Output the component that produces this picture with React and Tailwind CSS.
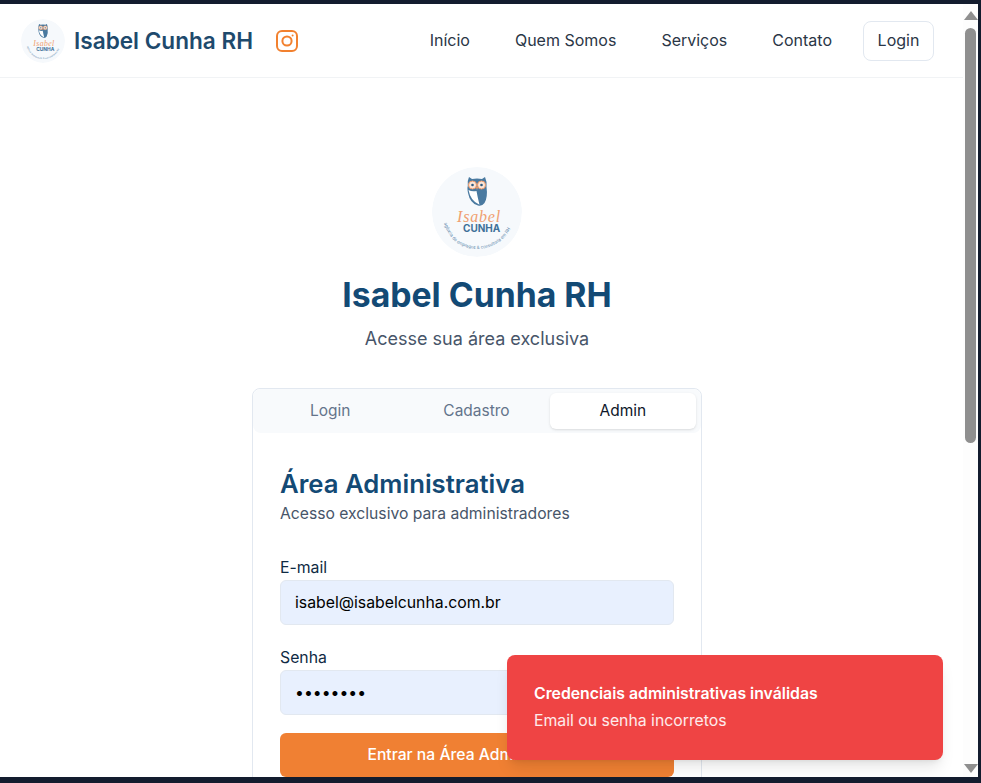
import React, { useId } from 'react';

const fontStack = "font-['Inter',sans-serif]";

function OwlLogo({ size }) {
  const arcId = useId();
  return (
    <svg width={size} height={size} viewBox="0 0 90 90" className="rounded-full">
      <circle cx="45" cy="45" r="45" fill="#f6f9fc" />
      {/* owl */}
      <path d="M37 10 L40 12 Q45 11 50 12 L53 10 Q55 14 54.5 20 Q56 30 52.5 36 Q50 39.5 46 38.5 Q38 36.5 36 26 Q35 21 35.8 19 Q35 14 37 10 Z" fill="#4a7aa0" />
      <path d="M36.5 23 Q38.5 34 47.5 37.8 Q45.5 30 44.5 24 Q40 25 36.5 23 Z" fill="#ffffff" />
      <circle cx="40.5" cy="18" r="4" fill="#fbe6d8" stroke="#ee9a68" strokeWidth="1" />
      <circle cx="49.5" cy="18" r="4" fill="#fbe6d8" stroke="#ee9a68" strokeWidth="1" />
      <circle cx="40.5" cy="18" r="1.3" fill="#2d5a80" />
      <circle cx="49.5" cy="18" r="1.3" fill="#2d5a80" />
      <path d="M43.8 20 L46.2 20 L45 23 Z" fill="#ee9a68" />
      {/* wordmark */}
      <text x="25" y="55" fontFamily="'Liberation Serif',serif" fontStyle="italic" fontSize="16" fill="#f0a070" letterSpacing="0.8">Isabel</text>
      <text x="31" y="65" fontFamily="'Inter',sans-serif" fontWeight="700" fontSize="10" fill="#3f7199">CUNHA</text>
      <path id={arcId} d="M12 56 Q20 82 47 82 Q72 80 82 54" fill="none" />
      <text fontFamily="'Inter',sans-serif" fontSize="4.6" fill="#5f8aac">
        <textPath href={`#${arcId}`} textLength="86" lengthAdjust="spacingAndGlyphs">agência de empregos &amp; consultoria em RH</textPath>
      </text>
    </svg>
  );
}

function InstagramIcon() {
  return (
    <svg width="24" height="24" viewBox="0 0 24 24" fill="none" stroke="#f2812f" strokeWidth="2" strokeLinecap="round" strokeLinejoin="round">
      <rect x="2" y="2" width="20" height="20" rx="5" ry="5" />
      <circle cx="12" cy="12" r="4.6" />
      <line x1="17.6" y1="6.4" x2="17.61" y2="6.4" />
    </svg>
  );
}

function Field({ label, value, type }) {
  return (
    <div className="flex flex-col gap-[2px]">
      <label className="text-[15.8px] leading-5 font-normal text-[#0f2a43]">{label}</label>
      <input
        readOnly
        type={type}
        value={value}
        className="h-[45px] w-full rounded-md border border-[#e2e8f0] bg-[#e8f0fe] px-[14px] text-[15.8px] text-black outline-none"
      />
    </div>
  );
}

function Scrollbar() {
  return (
    <div className="flex w-[15px] shrink-0 flex-col items-center bg-[#fdfdfd]">
      <div className="mt-[7px] h-0 w-0 border-x-[7px] border-b-[9px] border-x-transparent border-b-[#8f8f8f]" />
      <div className="mt-[8px] h-[415px] w-[11px] rounded-full bg-[#8f8f8f]" />
      <div className="mt-auto mb-[4px] h-0 w-0 border-x-[7px] border-t-[9px] border-x-transparent border-t-[#8f8f8f]" />
    </div>
  );
}

export default function App() {
  return (
    <div className={`${fontStack} relative flex h-screen overflow-hidden border-t-[4px] border-r-[3px] border-b-[6px] border-[#131c2e] bg-white`}>
      <div className="flex min-w-0 flex-1 flex-col overflow-hidden">
        {/* Navbar */}
        <nav className="flex h-[74px] shrink-0 items-center justify-between border-b border-[#f1f3f5] pr-[29px] pl-[21px]">
          <div className="flex items-center">
            <OwlLogo size={44} />
            <span className="ml-[9px] text-[22.6px] font-semibold text-[#1e4a6d]">Isabel Cunha RH</span>
            <span className="ml-[22px] flex"><InstagramIcon /></span>
          </div>
          <div className="flex items-center">
            <a className="pb-[2px] text-base font-normal text-[#2a3646]">Início</a>
            <a className="ml-[45px] pb-[2px] text-base font-normal text-[#2a3646]">Quem Somos</a>
            <a className="ml-[45px] pb-[2px] text-base font-normal text-[#2a3646]">Serviços</a>
            <a className="ml-[45px] pb-[2px] text-base font-normal text-[#2a3646]">Contato</a>
            <button className="ml-[31px] h-[40px] w-[71px] rounded-lg border border-[#e2e8f0] bg-white pb-[2px] text-base font-normal text-[#2a3646]">Login</button>
          </div>
        </nav>

        {/* Main */}
        <main className="flex flex-1 flex-col items-center pt-[89px] pr-[9px]">
          <OwlLogo size={90} />
          <h1 className="mt-[13px] text-[33.75px] leading-[50px] font-bold text-[#134a75]">Isabel Cunha RH</h1>
          <p className="mt-[5px] text-lg leading-7 text-[#475569]">Acesse sua área exclusiva</p>

          <div className="mt-[35px] w-[450px] shrink-0 rounded-lg border border-[#e2e8f0] bg-white">
            <div className="grid grid-cols-3 rounded-lg bg-[#f8fafc] py-[4px] pr-[5px] pl-[4px] text-[15.5px] font-normal">
              <button className="h-[36px] text-[#64748b]">Login</button>
              <button className="h-[36px] text-[#64748b]">Cadastro</button>
              <button className="h-[36px] rounded-md bg-white text-[#0f172a] shadow-sm">Admin</button>
            </div>
            <div className="px-[27px] pt-[35px] pb-[27px]">
              <h2 className="text-[25.7px] leading-8 font-semibold text-[#134a75]">Área Administrativa</h2>
              <p className="mt-[4px] text-[15.7px] leading-5 text-[#475569]">Acesso exclusivo para administradores</p>
              <div className="mt-[34px] flex flex-col gap-[23px]">
                <Field label="E-mail" type="text" value="isabel@isabelcunha.com.br" />
                <Field label="Senha" type="password" value="12345678" />
              </div>
              <button className="mt-[18px] h-[44px] w-full rounded-md bg-[#f08033] text-[15.7px] font-medium text-white">
                Entrar na Área Administrativa
              </button>
            </div>
          </div>
        </main>
      </div>
      <Scrollbar />

      {/* Toast */}
      <div className="absolute top-[651px] left-[507px] flex h-[105px] w-[436px] flex-col justify-center gap-[7px] rounded-lg bg-[#ef4444] px-[27px] text-white shadow-lg">
        <div className="text-[15.8px] leading-5 font-semibold">Credenciais administrativas inválidas</div>
        <div className="text-[15.8px] leading-5 text-white/90">Email ou senha incorretos</div>
      </div>
    </div>
  );
}
